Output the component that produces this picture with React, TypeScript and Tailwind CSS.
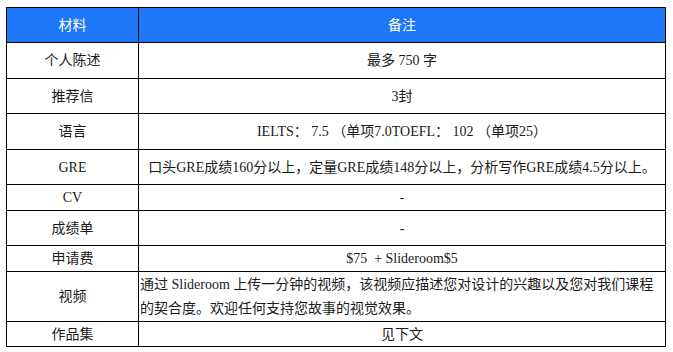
const rows: { label: string; note: string; h: string }[] = [
  { label: '个人陈述', note: '最多 750 字', h: 'h-[36px]' },
  { label: '推荐信', note: '3封', h: 'h-[35px]' },
  { label: '语言', note: 'IELTS： 7.5 （单项7.0TOEFL： 102 （单项25）', h: 'h-[36px]' },
  { label: 'GRE', note: '口头GRE成绩160分以上，定量GRE成绩148分以上，分析写作GRE成绩4.5分以上。', h: 'h-[35px]' },
  { label: 'CV', note: '-', h: 'h-[26px]' },
  { label: '成绩单', note: '-', h: 'h-[35px]' },
  { label: '申请费', note: '$75  + Slideroom$5', h: 'h-[26px]' },
];

export default function App() {
  return (
    <div className="min-h-screen bg-white pt-[7px] pl-[6px] font-['Liberation_Serif','Noto_Sans_CJK_SC',serif] text-[14px] text-[#1a1a1a]">
      <table className="w-[660px] table-fixed border-collapse border border-black">
        <colgroup>
          <col className="w-[132px]" />
          <col />
        </colgroup>
        <thead>
          <tr className="h-[35px] bg-[#1e77f6] text-white">
            <th className="border border-black font-normal">材料</th>
            <th className="border border-black font-normal">备注</th>
          </tr>
        </thead>
        <tbody>
          {rows.map((r) => (
            <tr key={r.label} className={r.h}>
              <td className="border border-black p-0 text-center">{r.label}</td>
              <td className="border border-black p-0 text-center whitespace-pre">{r.note}</td>
            </tr>
          ))}
          <tr className="h-[50px]">
            <td className="border border-black p-0 text-center">视频</td>
            <td className="border border-black p-0 pl-[1px] text-left leading-6">
              通过 Slideroom 上传一分钟的视频，该视频应描述您对设计的兴趣以及您对我们课程的契合度。欢迎任何支持您故事的视觉效果。
            </td>
          </tr>
          <tr className="h-[25px]">
            <td className="border border-black p-0 text-center">作品集</td>
            <td className="border border-black p-0 text-center">见下文</td>
          </tr>
        </tbody>
      </table>
    </div>
  );
}
